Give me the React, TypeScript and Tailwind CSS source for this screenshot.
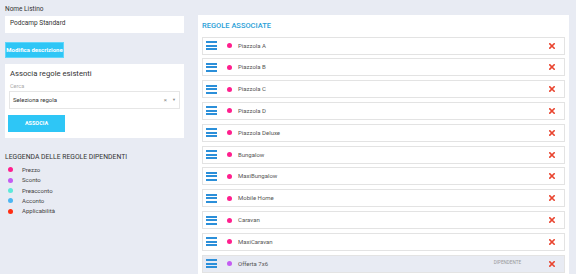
const rules = [
  { name: "Piazzola A", color: "#ff1f8e" },
  { name: "Piazzola B", color: "#ff1f8e" },
  { name: "Piazzola C", color: "#ff1f8e" },
  { name: "Piazzola D", color: "#ff1f8e" },
  { name: "Piazzola Deluxe", color: "#ff1f8e" },
  { name: "Bungalow", color: "#ff1f8e" },
  { name: "MaxiBungalow", color: "#ff1f8e" },
  { name: "Mobile Home", color: "#ff1f8e" },
  { name: "Caravan", color: "#ff1f8e" },
  { name: "MaxiCaravan", color: "#ff1f8e" },
  { name: "Offerta 7x6", color: "#c45cf2", dependent: true },
];

const legend = [
  { label: "Prezzo", color: "#ff1f8e" },
  { label: "Sconto", color: "#c45cf2" },
  { label: "Preacconto", color: "#5ce9da" },
  { label: "Acconto", color: "#4cb6f2" },
  { label: "Applicabilità", color: "#ff2d12" },
];

function Hamburger() {
  return (
    <div className="flex flex-col gap-[1.5px] w-[11px]">
      <div className="h-[2px] bg-[#2b8fd9]" />
      <div className="h-[2px] bg-[#2b8fd9]" />
      <div className="h-[2px] bg-[#2b8fd9]" />
    </div>
  );
}

function RemoveIcon() {
  return (
    <svg width="6" height="6" viewBox="0 0 6 6">
      <path d="M0.8 0.8 L5.2 5.2 M5.2 0.8 L0.8 5.2" stroke="#e9442f" strokeWidth="1.6" strokeLinecap="square" />
    </svg>
  );
}

export default function App() {
  return (
    <div
      className="w-[576px] h-[274px] overflow-hidden bg-[#e8ebf3] flex text-[#444]"
      style={{ fontFamily: "Roboto, 'Liberation Sans', sans-serif" }}
    >
      <div className="w-[179px] ml-[5px] shrink-0 flex flex-col">
        <div className="text-[6.5px] leading-none mt-[6px] text-[#333]">Nome Listino</div>
        <div className="h-[17px] mt-[3px] bg-white flex items-center px-[5px] text-[6.5px] text-[#333]">
          Podcamp Standard
        </div>
        <div className="mt-[9px] w-[59px] h-[16px] bg-[#2ec6f6] border border-[#5fd6fa] flex items-center justify-center text-white text-[6px] font-bold whitespace-nowrap">
          Modifica descrizione
        </div>
        <div className="mt-[6px] h-[74px] bg-white px-[4px] flex flex-col">
          <div className="text-[7.7px] leading-none mt-[6px] ml-[1px] text-[#333]">Associa regole esistenti</div>
          <div className="text-[5.5px] leading-none mt-[7px] ml-[1px] text-[#aaa]">Cerca</div>
          <div className="mt-[1px] h-[18px] border border-[#e6e6e6] flex items-center px-[3px] text-[6px] text-[#333]">
            <span className="flex-1">Seleziona regola</span>
            <span className="text-[#888] text-[6px] mr-[5px]">×</span>
            <span className="text-[#888] text-[4px]">▼</span>
          </div>
          <div className="mt-[6px] -ml-[1px] w-[57px] h-[17px] bg-[#2ec6f6] flex items-center justify-center text-white text-[5.5px] font-bold">
            ASSOCIA
          </div>
        </div>
        <div className="mt-[16px] text-[6.8px] leading-none text-[#333] whitespace-nowrap">
          LEGGENDA DELLE REGOLE DIPENDENTI
        </div>
        <div className="mt-[6px] flex flex-col gap-[3.4px]">
          {legend.map((l) => (
            <div key={l.label} className="flex items-center h-[7px]">
              <div className="w-[5px] h-[5px] rounded-full ml-[3px]" style={{ backgroundColor: l.color }} />
              <span className="ml-[9px] text-[6px] leading-none text-[#444]">{l.label}</span>
            </div>
          ))}
        </div>
      </div>
      <div className="ml-[14px] mt-[15px] w-[371px] shrink-0 bg-white px-[4px] flex flex-col">
        <div className="text-[7.5px] leading-none mt-[7px] text-[#2a9fd8] font-medium">REGOLE ASSOCIATE</div>
        <div className="mt-[7px] flex flex-col gap-[3.83px]">
          {rules.map((r) => (
            <div
              key={r.name}
              className={`h-[18px] shrink-0 border border-[#e3e3e3] flex items-center pl-[3px] pr-[9px] ${r.dependent ? "bg-[#e8ebf3]" : "bg-white"}`}
            >
              <Hamburger />
              <div className="w-[5px] h-[5px] rounded-full ml-[10px]" style={{ backgroundColor: r.color }} />
              <span className="ml-[6px] text-[6px] leading-none text-[#555] flex-1">{r.name}</span>
              {r.dependent && <span className="text-[4.6px] leading-none text-[#999] mr-[28px]">DIPENDENTE</span>}
              <RemoveIcon />
            </div>
          ))}
        </div>
      </div>
    </div>
  );
}
